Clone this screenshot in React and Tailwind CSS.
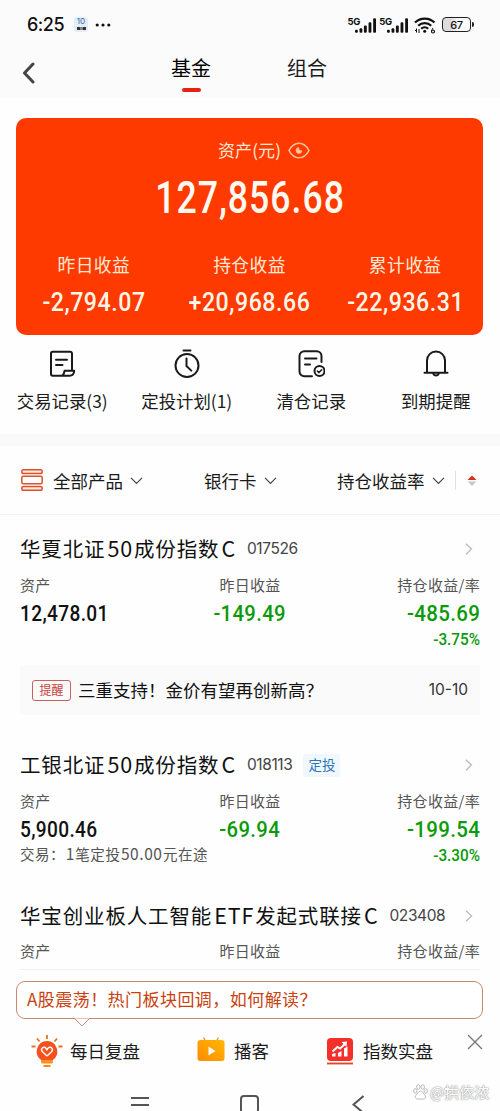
import React from 'react';

const actions = [
  { label: '交易记录(3)', icon: 'record' },
  { label: '定投计划(1)', icon: 'timer' },
  { label: '清仓记录', icon: 'cleared' },
  { label: '到期提醒', icon: 'bell' },
];

const summary = [
  { label: '昨日收益', value: '-2,794.07' },
  { label: '持仓收益', value: '+20,968.66' },
  { label: '累计收益', value: '-22,936.31' },
];

const ActionIcon = ({ name }) => (
  <svg width="28" height="30" viewBox="0 0 28 30" fill="none" stroke="#1a1a1a" strokeWidth="2" strokeLinecap="round" strokeLinejoin="round">
    {name === 'record' && (
      <>
        <path d="M24 21V4.500a1.800 1.800 0 0 0-1.800-1.800H4.800A1.800 1.800 0 0 0 3 4.500V25a1.800 1.800 0 0 0 1.800 1.800H21.500c2.500 0 4.500-1.500 4.700-5H16.500c-.3 2.500-1.300 4.500-3 5" />
        <path d="M8 10.800h11M8 16h6.500" />
      </>
    )}
    {name === 'timer' && (
      <>
        <circle cx="14" cy="16.500" r="11.500" />
        <path d="M10.500 1.500h7M13.500 9.500v7.500l4.800 4.600" />
      </>
    )}
    {name === 'cleared' && (
      <>
        <path d="M24.500 13V7a4.800 4.800 0 0 0-4.800-4.800H7.300A4.800 4.800 0 0 0 2.500 7v15.500a4.800 4.800 0 0 0 4.800 4.800H15M8 9.500h11.500M8 15.500h5" />
        <circle cx="22.500" cy="22" r="5" />
        <path d="m20.300 22 1.700 1.600 2.700-2.800" strokeWidth="1.500" />
      </>
    )}
    {name === 'bell' && (
      <>
        <path d="M2.500 23.800h23M5 23V11.500a9 9 0 0 1 18 0V23" />
        <path d="M11.300 24.500a2.800 2.800 0 0 0 5.400 0" />
      </>
    )}
  </svg>
);

const Signal = () => (
  <div className="flex items-end">
    <span className="mb-[7px] font-[Inter] text-[9.500px] leading-[9px] font-bold tracking-[-0.2px]">5G</span>
    <svg width="21" height="15" viewBox="0 0 20 14" className="-ml-[5px]" fill="#111">
      <rect x="0" y="11" width="2.700" height="3" rx="1" />
      <rect x="4.300" y="9.500" width="2.700" height="4.500" rx="1" />
      <rect x="8.500" y="7" width="2.700" height="7" rx="1" />
      <rect x="12.900" y="4" width="2.700" height="10" rx="1" />
      <rect x="17.300" y="0" width="2.700" height="14" rx="1" />
    </svg>
  </div>
);

const StatusBar = () => (
  <div className="flex h-[48px] items-center pt-px pr-[26px] pl-[27px] text-[#111]">
    <span className="w-[47px] font-[Inter] text-[18px] font-medium tracking-[-0.5px]">6:25</span>
    <div className="flex h-[15px] w-[14px] flex-col items-center rounded-[3px] bg-[#e3edf5]">
      <span className="font-[Inter] text-[8px] leading-[9px] text-[#2b6ba8]">10</span>
      <span className="mt-px h-[3px] w-[9px] border-x-[3px] border-[#333] bg-[#888]" />
    </div>
    <svg width="16" height="4" viewBox="0 0 16 4" className="ml-[7px]" fill="#111">
      <circle cx="2.200" cy="2" r="1.600" />
      <circle cx="8" cy="2" r="1.600" />
      <circle cx="13.800" cy="2" r="1.600" />
    </svg>
    <div className="ml-auto flex items-center">
      <Signal />
      <div className="ml-[3px]"><Signal /></div>
      <svg width="22" height="18" viewBox="0 0 22 18" className="ml-[6px]" fill="none" stroke="#111" strokeWidth="2.200">
        <path d="M1 6.500a14 14 0 0 1 19.500 0M4.200 9.800a9.200 9.200 0 0 1 13 0M7.200 12.800a5 5 0 0 1 7 0" />
        <circle cx="10.700" cy="15.300" r="1.500" fill="#111" stroke="none" />
        <path d="M2.500 12.500v4m-1.500-1.500 1.500-1.500M5 17v-4M19 12l-1.500 2.500" strokeWidth="1" />
        <circle cx="19" cy="15.500" r="1.500" strokeWidth="1.200" />
      </svg>
      <div className="ml-[6px] flex h-[15px] w-[29px] items-center justify-center rounded-[4px] border-[1.5px] border-[#222] bg-linear-to-r from-[#ddd] from-30% to-transparent to-60% font-[Inter] text-[11px] leading-[12px] font-medium tracking-[-0.4px]">67</div>
      <div className="ml-px h-[5px] w-[2px] rounded-r bg-[#222]" />
    </div>
  </div>
);

const Down = () => (
  <svg width="13" height="8" viewBox="0 0 13 8" fill="none" stroke="#444" strokeWidth="1.200">
    <path d="m1 .8 5.500 5.700L12 .8" />
  </svg>
);

// Latin letters and digits get a little air around them
const Mixed = ({ text, latinClass }) =>
  text.split(/([A-Z0-9.]+)/).map((part, index) => (
    <span key={index} className={index % 2 ? latinClass : ''}>{part}</span>
  ));

const FundTitle = ({ name, code, tag }) => (
  <div className="flex h-[30px] items-center">
    <span className="pb-[2px] text-[20.5px] tracking-[0.85px] whitespace-nowrap text-[#111]">
      <Mixed text={name} latinClass="pl-[2px] pr-[1px] text-[21.5px]" />
    </span>
    <span className="ml-[10px] font-[Inter] text-[15.5px] tracking-[-0.4px] text-[#444]">{code}</span>
    {tag && (
      <span className="ml-[11px] flex h-[23px] w-[37px] items-center justify-center rounded-[2px] bg-[#f0f8fe] pb-px text-[13.5px] text-[#2e76b8]">{tag}</span>
    )}
    <svg width="8" height="12" viewBox="0 0 8 12" className="mr-[7px] ml-auto" fill="none" stroke="#bbb" strokeWidth="1.300">
      <path d="m1 .8 5.500 5.200L1 11.200" />
    </svg>
  </div>
);

const FundLabels = () => (
  <div className="grid h-[28px] grid-cols-3 items-center text-[15px] tracking-[0.3px] text-[#555]">
    <span>资产</span>
    <span className="text-center">昨日收益</span>
    <span className="text-right">持仓收益/率</span>
  </div>
);

const FundValues = ({ asset, yesterday, total, rate, note }) => (
  <>
    <div className="grid h-[28px] grid-cols-3 items-center font-[Roboto] text-[22.5px] leading-[28px] font-medium tracking-[0.4px] text-[#0a9a0a]">
      <span className="origin-left scale-x-[.85] text-[#111]">{asset}</span>
      <span className="scale-x-[.9] text-center">{yesterday}</span>
      <span className="origin-right scale-x-[.91] text-right">{total}</span>
    </div>
    <div className="flex h-[25px] items-center justify-between">
      <span className="pb-[3px] text-[14.5px] tracking-[0.55px] text-[#555]">
        {note && <Mixed text={note} latinClass="px-[0.5px] text-[15.5px]" />}
      </span>
      <span className="origin-right scale-x-[.9] font-[Roboto] text-[17px] font-medium text-[#0a9a0a]">{rate}</span>
    </div>
  </>
);

const App = () => {
  return (
    <div className="relative flex h-[1111px] w-[500px] flex-col overflow-hidden bg-[#fefefe] font-['Noto_Sans_CJK_SC',sans-serif] text-[#1a1a1a]">
      <div className="h-[98px] bg-[#fbfbfb]">
        <StatusBar />
        <div className="flex h-[50px] items-start pl-[22px]">
          <svg width="14" height="22" viewBox="0 0 14 22" className="mt-[14px]" fill="none" stroke="#444" strokeWidth="3" strokeLinecap="round" strokeLinejoin="round">
            <path d="M11 2 2.500 11l8.500 9" />
          </svg>
          <div className="ml-[135px] flex w-[40px] flex-col items-center">
            <span className="mt-[5px] text-[20px] leading-[30px] whitespace-nowrap text-black">基金</span>
            <span className="mt-[5px] h-[4px] w-[19px] rounded-full bg-[#e42313]" />
          </div>
          <span className="mt-[5px] ml-[76px] text-[20px] leading-[30px]">组合</span>
        </div>
      </div>

      <div className="mx-[16px] mt-[20px] h-[217px] w-[467px] shrink-0 rounded-[10px] bg-[#ff3a00] text-[#ffe9d2]">
        <div className="flex h-[50px] items-center justify-center gap-[7px] pt-[14px] pl-[29px]">
          <span className="text-[17px] tracking-[0.1px]">资产(元)</span>
          <svg width="22" height="17" viewBox="0 0 22 17" fill="none" stroke="#ffc59a" strokeWidth="1.600">
            <path d="M1 8.500C6-1.200 16-1.200 21 8.500 16 18.200 6 18.200 1 8.500Z" />
            <path d="M10.500 5.500a3 3 0 1 0 3.500 3.300l-2.500-.3z" fill="#ffc59a" strokeWidth=".6" />
          </svg>
        </div>
        <div className="flex h-[60px] items-center justify-center pl-[2px]">
          <span className="scale-x-[.81] font-[Roboto] text-[44px] font-medium tracking-[1.2px] text-[#fffaf0]">127,856.68</span>
        </div>
        <div className="mt-[22px] grid grid-cols-3">
          {summary.map((item) => (
            <div key={item.label} className="flex flex-col items-center">
              <span className="flex h-[29px] items-center text-[17.8px] tracking-[0.4px]">{item.label}</span>
              <span className="flex h-[46px] scale-x-[.89] items-center font-[Roboto] text-[26px] font-medium tracking-[0.6px] text-[#fff6e8]">{item.value}</span>
            </div>
          ))}
        </div>
      </div>

      <div className="grid h-[99px] w-[498px] shrink-0 grid-cols-4 pt-[14px]">
        {actions.map((item) => (
          <div key={item.label} className="flex flex-col items-center">
            <ActionIcon name={item.icon} />
            <span className="mt-[7px] text-[17.4px] leading-[30px] whitespace-nowrap">{item.label}</span>
          </div>
        ))}
      </div>
      <div className="h-[12px] shrink-0 bg-[#f9f9f9]" />

      <div className="flex h-[69px] shrink-0 items-center border-b border-[#f2f2f2] pt-px pl-[21px] text-[17.5px]">
        <svg width="22" height="22" viewBox="0 0 22 22" fill="#ffe9dc" stroke="#d9532c" strokeWidth="1.500" className="mb-[2px]">
          <rect x=".8" y=".8" width="20.400" height="3.700" rx="1.800" />
          <rect x=".8" y="7.300" width="20.400" height="7.400" rx="1.500" fill="#fff" />
          <rect x=".8" y="17.500" width="20.400" height="3.700" rx="1.800" />
        </svg>
        <div className="ml-[10px] flex w-[151px] items-center gap-[7px] pt-px">全部产品<Down /></div>
        <div className="flex w-[133px] items-center gap-[7px] pt-px">银行卡<Down /></div>
        <div className="flex w-[118px] items-center gap-[7px] pt-px">持仓收益率<Down /></div>
        <div className="h-[19px] w-px bg-[#e2e2e2]" />
        <svg width="10" height="12" viewBox="0 0 10 12" className="ml-[11px]">
          <path d="M5 .5 9.500 5h-9z" fill="#d9301a" />
          <path d="M5 11 .5 6.500h9z" fill="#c8c8c8" />
        </svg>
      </div>

      <div className="flex flex-1 flex-col px-[20px] pt-[19px]">
        <FundTitle name="华夏北证50成份指数C" code="017526" />
        <div className="mt-[7px]">
          <FundLabels />
          <FundValues asset="12,478.01" yesterday="-149.49" total="-485.69" rate="-3.75%" />
        </div>
        <div className="mt-[13px] flex h-[50px] items-center rounded-[3px] bg-[#fafafa] px-[12px]">
          <span className="flex h-[21px] w-[39px] items-center justify-center rounded-[3px] border border-[#c9605c] text-[12px] text-[#c5423e]">提醒</span>
          <span className="ml-[7px] text-[17.5px] text-[#111]">三重支持！金价有望再创新高？</span>
          <span className="ml-auto font-[Inter] text-[15.5px] text-[#333]">10-10</span>
        </div>
        <div className="mt-[35px]">
          <FundTitle name="工银北证50成份指数C" code="018113" tag="定投" />
          <div className="mt-[7px]">
            <FundLabels />
            <FundValues asset="5,900.46" yesterday="-69.94" total="-199.54" rate="-3.30%" note="交易：1笔定投50.00元在途" />
          </div>
        </div>
        <div className="mt-[33px]">
          <FundTitle name="华宝创业板人工智能ETF发起式联接C" code="023408" />
          <div className="mt-[6px] h-[33px] border-b border-[#f0f0f0]">
            <FundLabels />
          </div>
        </div>
      </div>

      <div className="h-[142px] shrink-0">
        <div className="relative mr-[17px] ml-[16px] mt-[11px] flex h-[38px] items-center rounded-[9px] border border-[#c98a70] bg-white pb-[3px] pl-[10px] text-[17px] tracking-[0.45px] text-[#c8410f]">
          A股震荡！热门板块回调，如何解读？
          <svg width="16" height="9" viewBox="0 0 16 9" className="absolute top-[35.500px] left-[57px]" fill="#fff" stroke="#c98a70">
            <path d="M.5.500 8 7.800 15.500.5" />
          </svg>
        </div>
        <div className="flex h-[64px] items-center pl-[31px] text-[17.5px]">
          <svg width="32" height="34" viewBox="0 0 32 34">
            <path d="M16 7a10.500 10.500 0 0 0-5.500 19.300V29h11v-2.700A10.500 10.500 0 0 0 16 7Z" fill="#f4511e" />
            <path d="M10.500 26h11v3.500h-11z" fill="#ff8f1f" />
            <path d="M12.500 32h7" stroke="#f58a1f" strokeWidth="2" />
            <path d="M16 1v4M6 4.500l2.500 3M26 4.500l-2.500 3M.5 12.500h4M27.500 12.500h4" stroke="#e9701f" strokeWidth="1.800" />
            <path d="m16 22-4.500-4.200c-2.600-2.600.9-6.200 3.500-3.600l1.800 1.800M16 22l4.500-4.200c2.600-2.600-.9-6.200-3.500-3.600l-2 2" fill="none" stroke="#fff" strokeWidth="1.400" />
          </svg>
          <span className="ml-[7px]">每日复盘</span>
          <svg width="28" height="24" viewBox="0 0 28 24" className="mb-[4px] ml-[57px]">
            <defs>
              <linearGradient id="tv" x1="0" y1="1" x2="1" y2="0">
                <stop offset="0" stopColor="#ff8a00" />
                <stop offset="1" stopColor="#ffb800" />
              </linearGradient>
            </defs>
            <path d="m6.500.5 2 3.500M21.500.5l-2 3.500" stroke="#e8951c" strokeWidth="1.300" />
            <rect x=".5" y="3" width="27" height="21" rx="3" fill="url(#tv)" />
            <path d="m11.500 9.500 7 4.500-7 4.500z" fill="#fff" />
          </svg>
          <span className="ml-[9px]">播客</span>
          <svg width="26" height="27" viewBox="0 0 26 27" className="ml-[58px]">
            <rect width="26" height="23" rx="4" fill="#f5302b" />
            <path d="M0 25.500h26" stroke="#e8431f" strokeWidth="1.800" />
            <path d="M5 18.500V16l3.500-1v3.500zM11 18.500V15l3.500-2v5.500zM17 18.500V10.500l3.500-2v10z" fill="#fff" />
            <path d="m5.500 13.500 5-4.500 2.500 1.500 5-4.500" fill="none" stroke="#fff" strokeWidth="2" />
            <path d="m14.500 4 5.500-.5-.5 5.500z" fill="#fff" />
          </svg>
          <span className="ml-[10px]">指数实盘</span>
          <svg width="16" height="16" viewBox="0 0 16 16" className="mb-[19px] ml-[34px]" fill="none" stroke="#777" strokeWidth="1.300">
            <path d="m1 1 14 14M15 1 1 15" />
          </svg>
        </div>
        <div className="flex h-[29px] items-start pt-[12px] pl-[131px]">
          <svg width="18" height="12" viewBox="0 0 18 12" className="mt-px" stroke="#555" strokeWidth="2">
            <path d="M0 2h18M0 9h18" />
          </svg>
          <svg width="19" height="19" viewBox="0 0 19 19" className="ml-[91px] shrink-0" fill="none" stroke="#555" strokeWidth="2">
            <rect x="1" y="1" width="17" height="17" rx="3" />
          </svg>
          <svg width="12" height="19" viewBox="0 0 12 19" className="ml-[93px] shrink-0" fill="none" stroke="#555" strokeWidth="2">
            <path d="M11.500 1 1.500 9.500l10 8.500" />
          </svg>
        </div>
      </div>

      <div className="absolute top-[1082px] left-[413px] flex items-center gap-[2px] text-[15px] leading-[20px] whitespace-nowrap text-white [text-shadow:0_0_1px_#888,0_0_2px_#999]">
        <svg width="15" height="16" viewBox="0 0 15 16" fill="#fff" stroke="#aaa" strokeWidth=".8">
          <ellipse cx="2.300" cy="7" rx="1.700" ry="2.300" />
          <ellipse cx="5.300" cy="3" rx="1.700" ry="2.300" />
          <ellipse cx="9.700" cy="3" rx="1.700" ry="2.300" />
          <ellipse cx="12.700" cy="7" rx="1.700" ry="2.300" />
          <path d="M7.500 7c-2 0-2.500 2.500-4.500 4.300-1.700 2 0 4 2 3.700h5c2 .3 3.700-1.700 2-3.700C10 9.500 9.500 7 7.500 7Z" />
        </svg>
        <span>@拱依浓</span>
      </div>
    </div>
  );
};

export default App;
